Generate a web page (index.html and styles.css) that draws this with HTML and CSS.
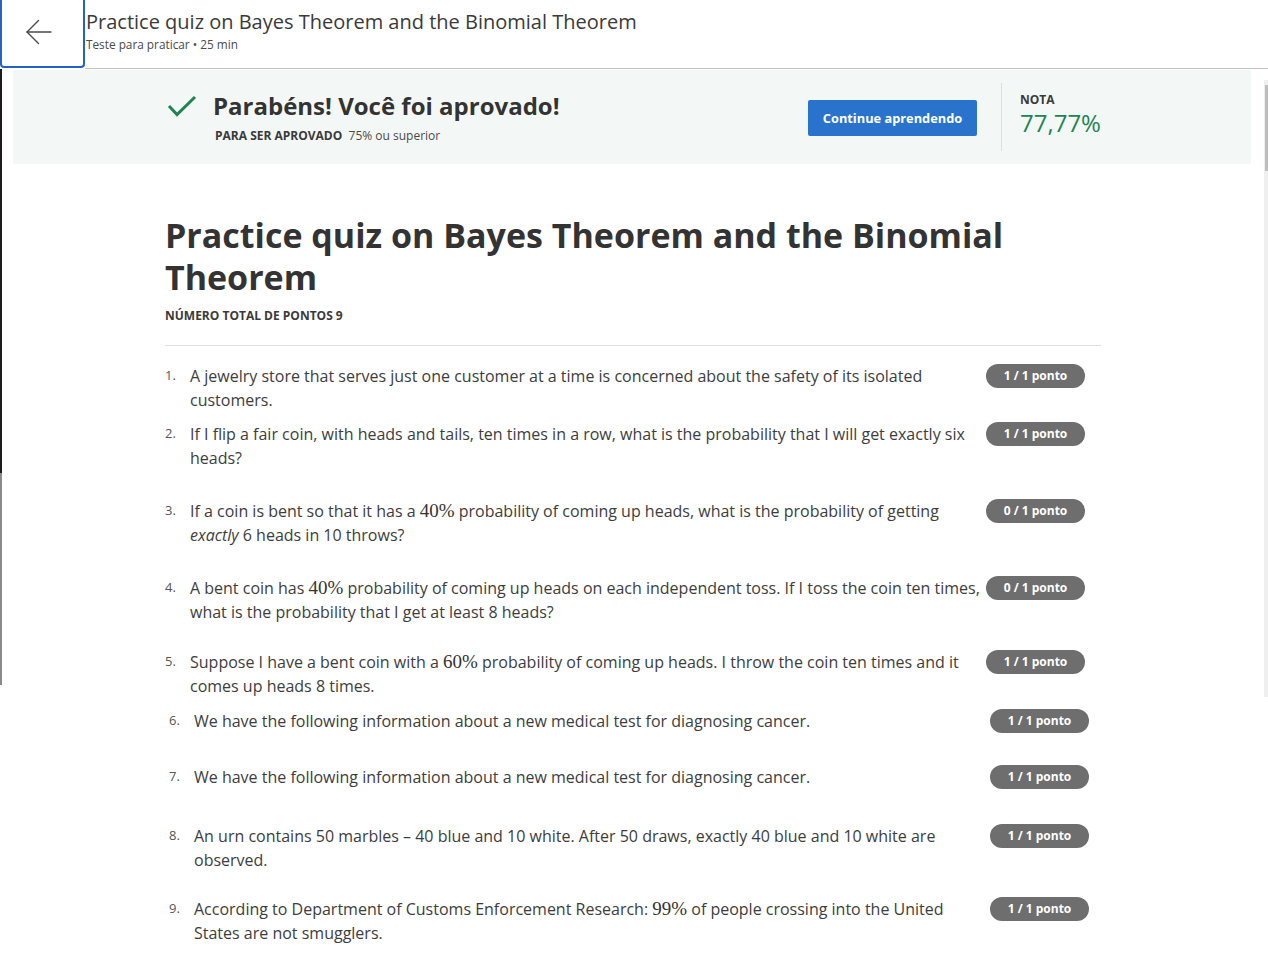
FILE: index.html
```html
<!DOCTYPE html>
<html lang="pt-BR">
<head>
<meta charset="utf-8">
<title>Practice quiz on Bayes Theorem and the Binomial Theorem</title>
<link rel="stylesheet" href="styles.css">
</head>
<body>
<header class="topbar">
  <a class="back" href="#" aria-label="Voltar">
    <svg width="26" height="26" viewBox="0 0 26 26" fill="none" stroke="#4a4a4a" stroke-width="1.4" stroke-linecap="round" stroke-linejoin="round">
      <path d="M1 13 H25"/>
      <path d="M12.5 1.5 L1 13 L12.5 24.5"/>
    </svg>
  </a>
  <div class="titles">
    <div class="title">Practice quiz on Bayes Theorem and the Binomial Theorem</div>
    <div class="meta">Teste para praticar • 25 min</div>
  </div>
</header>

<div class="viewport">
  <div class="edge"></div>
  <main class="content">
    <section class="banner">
      <div class="container banner-inner">
        <div class="result">
          <div class="result-head">
            <svg class="check" width="32" height="24" viewBox="0 0 32 24" fill="none" stroke="#1f8354" stroke-width="3" stroke-linecap="butt" stroke-linejoin="miter">
              <path d="M4 11 L12 19.5 L30 2"/>
            </svg>
            <h2>Parabéns! Você foi aprovado!</h2>
          </div>
          <p class="pass"><strong>PARA SER APROVADO</strong>&nbsp; 75% ou superior</p>
        </div>
        <button class="btn">Continue aprendendo</button>
        <div class="sep"></div>
        <div class="grade">
          <div class="grade-label">NOTA</div>
          <div class="grade-value">77,77%</div>
        </div>
      </div>
    </section>

    <div class="container">
      <h1>Practice quiz on Bayes Theorem and the Binomial Theorem</h1>
      <p class="total">NÚMERO TOTAL DE PONTOS 9</p>
      <hr class="rule">
      <ol class="questions">
        <li class="q after-10">
          <span class="num">1.</span>
          <div class="text">A jewelry store that serves just one customer at a time is concerned about the safety of its isolated customers.</div>
          <span class="badge">1 / 1 ponto</span>
        </li>
        <li class="q after-29">
          <span class="num">2.</span>
          <div class="text">If I flip a fair coin, with heads and tails, ten times in a row, what is the probability that I will get exactly six heads?</div>
          <span class="badge">1 / 1 ponto</span>
        </li>
        <li class="q after-29">
          <span class="num">3.</span>
          <div class="text">If a coin is bent so that it has a <span class="math">40%</span> probability of coming up heads, what is the probability of getting <em>exactly</em> 6 heads in 10 throws?</div>
          <span class="badge">0 / 1 ponto</span>
        </li>
        <li class="q after-26">
          <span class="num">4.</span>
          <div class="text">A bent coin has <span class="math">40%</span> probability of coming up heads on each independent toss. If I toss the coin ten times, what is the probability that I get at least 8 heads?</div>
          <span class="badge">0 / 1 ponto</span>
        </li>
        <li class="q">
          <span class="num">5.</span>
          <div class="text">Suppose I have a bent coin with a <span class="math">60%</span> probability of coming up heads. I throw the coin ten times and it comes up heads 8 times.</div>
          <span class="badge">1 / 1 ponto</span>
        </li>
      </ol>
    </div>
  </main>
  <div class="scrollbar"><div class="thumb"></div></div>
</div>

<section class="lower">
  <ol class="questions lower-list">
    <li class="q after-32">
      <span class="num">6.</span>
      <div class="text">We have the following information about a new medical test for diagnosing cancer.</div>
      <span class="badge">1 / 1 ponto</span>
    </li>
    <li class="q after-35">
      <span class="num">7.</span>
      <div class="text">We have the following information about a new medical test for diagnosing cancer.</div>
      <span class="badge">1 / 1 ponto</span>
    </li>
    <li class="q after-25">
      <span class="num">8.</span>
      <div class="text">An urn contains 50 marbles – 40 blue and 10 white. After 50 draws, exactly 40 blue and 10 white are observed.</div>
      <span class="badge">1 / 1 ponto</span>
    </li>
    <li class="q">
      <span class="num">9.</span>
      <div class="text">According to Department of Customs Enforcement Research: <span class="math">99%</span> of people crossing into the United States are not smugglers.</div>
      <span class="badge">1 / 1 ponto</span>
    </li>
  </ol>
</section>
</body>
</html>
```

FILE: styles.css
```css
* { box-sizing: border-box; }

html, body {
  margin: 0;
  padding: 0;
  background: #ffffff;
}

body {
  width: 1268px;
  height: 980px;
  overflow: hidden;
  font-family: "Open Sans", "Noto Sans", "DejaVu Sans", sans-serif;
  color: #373737;
}

/* ---------- top bar ---------- */
.topbar {
  display: flex;
  align-items: flex-start;
  height: 69px;
}

.back {
  width: 85px;
  height: 68px;
  flex: none;
  display: flex;
  align-items: center;
  justify-content: center;
  border: 2px solid #2263c4;
  border-top: none;
  border-radius: 0 0 4px 4px;
  padding-bottom: 2px;
  padding-right: 8px;
}

.titles {
  flex: 1;
  height: 69px;
  border-bottom: 1px solid #c4c4c4;
  padding: 8px 0 0 1px;
}

.title {
  font-size: 20px;
  line-height: 28px;
  color: #3a3a3a;
  font-weight: 400;
}

.meta {
  font-size: 11.8px;
  line-height: 16px;
  color: #4a4a4a;
}

/* ---------- viewport (scrolled area) ---------- */
.viewport {
  display: flex;
  height: 628px;
  overflow: hidden;
}

.edge {
  width: 2px;
  flex: none;
  height: 616px;
  background: linear-gradient(#1c1c1c 0, #1c1c1c 404px, #8a8a8a 404px, #8a8a8a 616px);
}

.content {
  flex: 1;
  min-width: 0;
}

.scrollbar {
  width: 4px;
  flex: none;
  margin-top: 11px;
  height: 617px;
  background: #efefef;
  padding-top: 5px;
}

.thumb {
  margin-left: 1px;
  width: 3px;
  height: 86px;
  background: #bdbdbd;
}

.container {
  width: 936px;
  margin: 0 auto;
}

/* ---------- banner ---------- */
.banner {
  margin: 1px 13px 0 11px;
  height: 94px;
  background: #f3f8f7;
}

.banner-inner {
  display: flex;
  align-items: center;
  height: 94px;
}

.result {
  padding-top: 2px;
  padding-left: 1px;
}

.result-head {
  display: flex;
  align-items: center;
  gap: 16px;
}

.check {
  flex: none;
  margin-top: 2px;
}

.result h2 {
  margin: 0;
  font-size: 24px;
  line-height: 30px;
  font-weight: 700;
  color: #333333;
}

.pass {
  margin: 6px 0 0 50px;
  font-size: 12px;
  line-height: 18px;
  color: #4a4a4a;
}

.pass strong {
  color: #3a3a3a;
  font-weight: 700;
}

.btn {
  margin-left: auto;
  width: 169px;
  height: 36px;
  border: none;
  border-radius: 2px;
  background: #2a73cc;
  color: #ffffff;
  font-family: inherit;
  font-size: 12.8px;
  font-weight: 700;
  padding: 0;
  margin-top: 2px;
}

.sep {
  width: 1px;
  height: 68px;
  margin-left: 24px;
  background: #dcdfde;
}

.grade {
  width: 80px;
  padding-left: 18px;
  box-sizing: content-box;
  margin-bottom: 4px;
}

.grade-label {
  font-size: 12px;
  line-height: 16px;
  font-weight: 700;
  color: #3a3a3a;
}

.grade-value {
  font-size: 24px;
  line-height: 30px;
  color: #1f8354;
  white-space: nowrap;
}

/* ---------- heading ---------- */
h1 {
  margin: 50px 0 0;
  font-size: 34px;
  line-height: 42px;
  font-weight: 700;
  color: #333333;
}

.total {
  margin: 9px 0 0;
  font-size: 12px;
  line-height: 18px;
  font-weight: 700;
  color: #3a3a3a;
}

.rule {
  margin: 20px 0 0;
  border: none;
  height: 1px;
  background: #e1e1e1;
}

/* ---------- questions ---------- */
.questions {
  list-style: none;
  margin: 18px 0 0;
  padding: 0;
}

.q {
  display: grid;
  grid-template-columns: 25px 796px 99px;
  column-gap: 0;
  align-items: start;
}

.num {
  font-size: 13px;
  line-height: 23px;
  color: #555555;
}

.text {
  font-size: 16px;
  line-height: 24px;
  color: #3d3d3d;
}

.text em {
  font-style: italic;
}

.math {
  font-family: "Liberation Serif", "DejaVu Serif", serif;
  font-size: 19px;
  color: #333333;
}

.badge {
  width: 99px;
  height: 24px;
  border-radius: 12px;
  background: #6e6e6e;
  color: #ffffff;
  font-size: 12px;
  font-weight: 700;
  line-height: 24px;
  text-align: center;
  white-space: nowrap;
}

.after-10 { margin-bottom: 10px; }
.after-25 { margin-bottom: 25px; }
.after-26 { margin-bottom: 26px; }
.after-29 { margin-bottom: 29px; }
.after-32 { margin-bottom: 32px; }
.after-35 { margin-bottom: 35px; }

/* ---------- lower page part ---------- */
.lower {
  padding-top: 12px;
}

.lower-list {
  width: 936px;
  margin: 0 0 0 169px;
}
```
